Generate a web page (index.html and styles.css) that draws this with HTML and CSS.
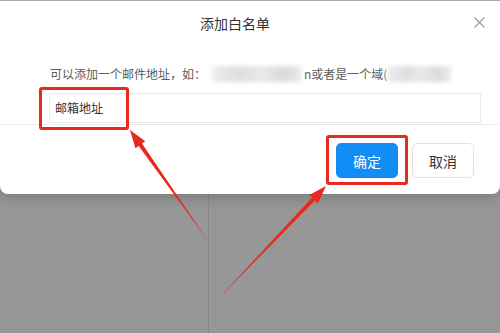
FILE: index.html
```html
<!DOCTYPE html>
<html lang="zh-CN">
<head>
<meta charset="utf-8" />
<title>添加白名单</title>
<link rel="stylesheet" href="styles.css">
</head>
<body>

<div class="dialog">
	<div class="dialog-header">
		<span class="dialog-title">添加白名单</span>
		<span class="dialog-close">
			<svg width="11" height="11" viewBox="0 0 11 11"><path d="M0.5 0.5 L10.5 10.5 M10.5 0.5 L0.5 10.5" stroke="#9a9a9a" stroke-width="1.2" fill="none"/></svg>
		</span>
	</div>
	<div class="dialog-body">
		<p class="hint">可以添加一个邮件地址，如：<span class="blur blur-a"></span>n或者是一个域(<span class="blur blur-b"></span></p>
		<div class="field">邮箱地址</div>
	</div>
	<div class="dialog-footer">
		<button class="btn btn-primary">确定</button>
		<button class="btn">取消</button>
	</div>
</div>
<div class="backdrop"><span class="seam"></span></div>

<!-- annotations drawn over the screenshot -->
<span class="mark mark-field"></span>
<span class="mark mark-ok"></span>
<svg class="arrows" width="500" height="333" viewBox="0 0 500 333">
	<polygon points="208,241 142,143.6 145.3,141.3 130,130 135.4,148.2 138.7,145.9" fill="#e8291f"/>
	<polygon points="219,298 315,200.4 317.9,203.2 326,186 309.2,194.9 312.1,197.6" fill="#e8291f"/>
</svg>

</body>
</html>
```

FILE: styles.css
```css
html, body {
	margin: 0;
	height: 100%;
}
body {
	position: relative;
	display: flex;
	flex-direction: column;
	background: #979797;
	font: 12px/18px "Noto Sans CJK SC", "Noto Sans", sans-serif;
	color: #333;
	overflow: hidden;
}

/* --------------------------------- */

.dialog {
	position: relative;
	z-index: 1;
	background: #fff;
	border-top: 1px solid #a9a9a9;
	border-radius: 0 0 8px 8px;
	box-shadow: 0 4px 14px rgba(0,0,0,0.18);
}
.dialog-header {
	display: flex;
	align-items: center;
	gap: 4px;
	height: 43px;
	padding-right: 15px;
}
.dialog-title {
	flex: 1;
	text-align: center;
	font-size: 14px;
	color: #333;
}
.dialog-close {
	display: flex;
	width: 11px;
	height: 11px;
}

.dialog-body {
	padding: 21px 19px 1px 49px;
	border-bottom: 1px solid #ececec;
}
.hint {
	margin: 0 0 10px 1px;
	color: #5c5c5c;
	white-space: nowrap;
}
.blur {
	display: inline-block;
	vertical-align: -3px;
	height: 16px;
	background: linear-gradient(90deg, #eeeeee, #dedede 30%, #e9e9e9 55%, #dadada 80%, #ececec);
	filter: blur(2px);
}
.blur-a {width: 90px; margin: 0 2px 0 6px;}
.blur-b {width: 64px;}

.field {
	height: 28px;
	line-height: 28px;
	padding-left: 5px;
	border: 1px solid #e9e9e9;
	color: #333;
}

.dialog-footer {
	display: flex;
	justify-content: flex-end;
	gap: 14px;
	padding: 18px 26px 16px;
}
.btn {
	width: 62px;
	height: 35px;
	border: 1px solid #e2e2e2;
	border-radius: 5px;
	background: #fff;
	font: 14px "Noto Sans CJK SC", "Noto Sans", sans-serif;
	color: #333;
}
.btn-primary {
	border-color: #118df6;
	background: #118df6;
	color: #fff;
}

/* --------------------------------- */

.backdrop {
	display: flex;
	flex: 1;
}
.seam {
	margin-left: 208px;
	width: 1px;
	background: #888;
}

/* --------------------------------- */

.mark {
	position: absolute;
	z-index: 2;
	border: 3px solid #e8291f;
	border-radius: 3px;
}
.mark-field {
	left: 39px; top: 87px;
	width: 84px; height: 37px;
}
.mark-ok {
	left: 326px; top: 135px;
	width: 76px; height: 44px;
}
.arrows {
	position: absolute;
	z-index: 3;
	left: 0; top: 0;
}
```
